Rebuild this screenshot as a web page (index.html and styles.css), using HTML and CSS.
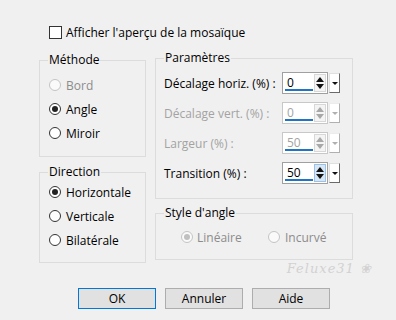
FILE: index.html
```html
<!DOCTYPE html>
<html lang="fr">
<head>
    <meta charset="UTF-8">
    <title>Mosaïque</title>
    <link rel="stylesheet" href="styles.css">
</head>
<body>
    <div class="dialog">
        <div class="check-row"><span class="checkbox"></span>Afficher l'aperçu de la mosaïque</div>

        <div class="columns">
            <div class="col">
                <fieldset class="group methode">
                    <legend>Méthode</legend>
                    <div class="option disabled"><span class="radio"></span>Bord</div>
                    <div class="option"><span class="radio on"></span>Angle</div>
                    <div class="option"><span class="radio"></span>Miroir</div>
                </fieldset>

                <fieldset class="group direction">
                    <legend>Direction</legend>
                    <div class="option"><span class="radio on"></span>Horizontale</div>
                    <div class="option"><span class="radio"></span>Verticale</div>
                    <div class="option"><span class="radio"></span>Bilatérale</div>
                </fieldset>
            </div>

            <div class="col">
                <fieldset class="group params">
                    <legend>Paramètres</legend>
                    <div class="param">
                        <span class="param-label">Décalage horiz. (%) :</span>
                        <div class="spin"><span class="value">0</span><span class="arrows"><i class="up"></i><i class="down"></i></span></div>
                        <span class="drop"><i></i></span>
                    </div>
                    <div class="param disabled">
                        <span class="param-label">Décalage vert. (%) :</span>
                        <div class="spin"><span class="value">0</span><span class="arrows"><i class="up"></i><i class="down"></i></span></div>
                        <span class="drop"><i></i></span>
                    </div>
                    <div class="param disabled">
                        <span class="param-label">Largeur (%) :</span>
                        <div class="spin"><span class="value">50</span><span class="arrows"><i class="up"></i><i class="down"></i></span></div>
                        <span class="drop"><i></i></span>
                    </div>
                    <div class="param">
                        <span class="param-label">Transition (%) :</span>
                        <div class="spin"><span class="value">50</span><span class="arrows hover"><i class="up"></i><i class="down"></i></span></div>
                        <span class="drop"><i></i></span>
                    </div>
                </fieldset>

                <fieldset class="group style-angle">
                    <legend>Style d'angle</legend>
                    <div class="inline-options">
                        <div class="option disabled lineaire"><span class="radio on"></span>Linéaire</div>
                        <div class="option disabled"><span class="radio"></span>Incurvé</div>
                    </div>
                </fieldset>
            </div>
        </div>

        <div class="signature">Feluxe31 ❀</div>

        <div class="buttons">
            <button class="btn default">OK</button>
            <button class="btn">Annuler</button>
            <button class="btn">Aide</button>
        </div>
    </div>
</body>
</html>
```

FILE: styles.css
```css
body { margin: 0; background: #f0f0f0; font-family: "Open Sans", "Noto Sans", sans-serif; font-size: 12px; color: #000; width: 396px; height: 320px; overflow: hidden; }

.dialog { padding: 24px 0 0 39px; }

.check-row { display: flex; align-items: center; height: 17px; padding-left: 10px; }
.checkbox { width: 13px; height: 13px; box-sizing: border-box; border: 1px solid #333; background: #fff; margin-right: 4px; }

.columns { display: grid; grid-template-columns: 107px 198px; column-gap: 9px; margin-top: 9px; align-items: start; }

.group { box-sizing: border-box; margin: 0; padding: 0 0 0 8px; border: 1px solid #dcdcdc; min-width: 0; }
.group legend { padding: 0 1px; line-height: 16px; }

.methode { margin-top: 2px; height: 105px; padding-top: 5px; }
.direction { margin-top: 7px; height: 99px; }
.params { height: 149px; padding-top: 2px; }
.style-angle { margin-top: 6px; height: 55px; padding-top: 4px; }

.option { display: flex; align-items: center; height: 24px; }
.option.disabled { color: #8c8c8c; }

.radio { position: relative; width: 12px; height: 12px; box-sizing: border-box; border: 1px solid #333; border-radius: 50%; background: #fff; margin: 0 5px 0 1px; flex: none; }
.radio.on::after { content: ""; position: absolute; left: 2px; top: 2px; width: 6px; height: 6px; border-radius: 50%; background: #222; }
.disabled .radio { border-color: #c4c4c4; background: #fafafa; }
.disabled .radio.on::after { background: #c0c0c0; }

.inline-options { display: flex; padding-left: 16px; }
.lineaire { width: 87px; }
.lineaire .radio { margin-right: 4px; }

.param { display: flex; align-items: center; height: 30px; }
.param-label { width: 118px; flex: none; }
.param.disabled .param-label { color: #a3a3a3; }

.spin { position: relative; display: flex; width: 46px; height: 22px; box-sizing: border-box; border: 1px solid #a0a0a0; background: #fff; }
.spin::after { content: ""; position: absolute; left: 2px; right: 14px; bottom: 2px; height: 2px; background: #1f75c4; }
.value { flex: 1; padding-left: 4px; line-height: 19px; }
.param.disabled .spin { border-color: #c8c8c8; }
.param.disabled .value { color: #a3a3a3; }

.arrows { display: flex; flex-direction: column; justify-content: center; align-items: center; gap: 2px; width: 10px; margin: 1px 1px 1px 0; border: 1px solid #d8d8d8; background: #f4f4f4; }
.arrows.hover { background: #d6e6f5; border-color: #9cc1e6; }
.arrows i { width: 0; height: 0; border-left: 4px solid transparent; border-right: 4px solid transparent; }
.arrows .up { border-bottom: 5px solid #111; }
.arrows .down { border-top: 5px solid #111; }
.param.disabled .arrows .up { border-bottom-color: #a8a8a8; }
.param.disabled .arrows .down { border-top-color: #a8a8a8; }

.drop { display: flex; align-items: center; justify-content: center; width: 11px; height: 20px; box-sizing: border-box; margin-left: 1px; border: 1px solid; border-color: #e0e0e0 #6a6a6a #6a6a6a #e0e0e0; background: #fff; }
.drop i { width: 0; height: 0; border-left: 3px solid transparent; border-right: 3px solid transparent; border-top: 3px solid #111; }
.param.disabled .drop { border-color: #ececec #b0b0b0 #b0b0b0 #ececec; }
.param.disabled .drop i { border-top-color: #b0b0b0; }

.signature { height: 14px; margin-top: -1px; padding-right: 24px; text-align: right; font-family: "DejaVu Serif", serif; font-style: italic; font-size: 13px; letter-spacing: 1px; line-height: 14px; color: #d2d2d2; }

.buttons { display: flex; gap: 9px; margin: 12px 0 0 39px; }
.btn { width: 78px; height: 21px; box-sizing: border-box; padding: 0; border: 1px solid #adadad; background: #e1e1e1; font-family: inherit; font-size: 12px; color: #000; }
.btn.default { border-color: #0078d7; }
```
